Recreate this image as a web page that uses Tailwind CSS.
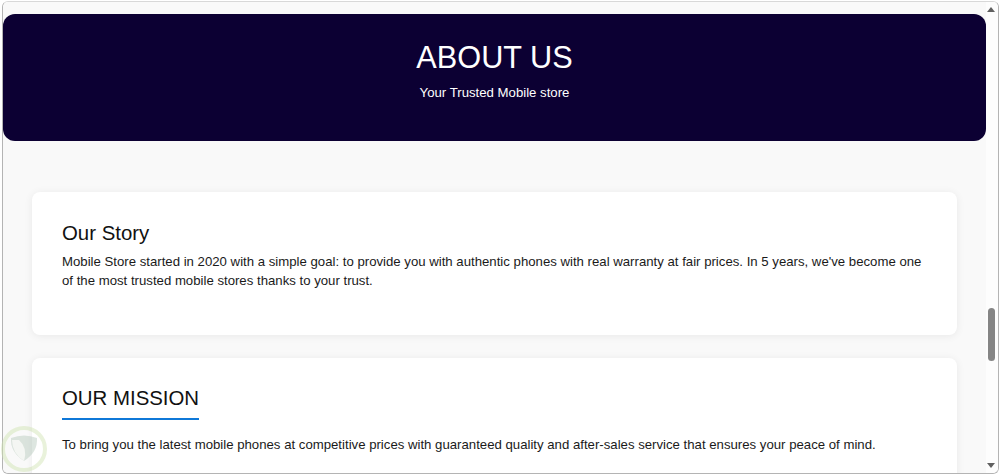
<!DOCTYPE html>
<html lang="en">
<head>
  <meta charset="UTF-8" />
  <title>About Us</title>
  <script src="https://cdn.jsdelivr.net/npm/@tailwindcss/browser@4"></script>
</head>
<body class="bg-white font-['Liberation_Sans',Arial,sans-serif]">
  <div class="relative h-[476px] w-[1000px] overflow-hidden pt-px pr-px pb-[2px] pl-[2px]">
    <!-- window frame -->
    <div class="flex h-[473px] w-[997px] overflow-hidden rounded-[6px] border border-[#b4b4b4] border-t-[#d8d8d8]">
      <!-- page -->
      <main class="h-full w-[983px] overflow-hidden bg-[#f9f9f9] pt-[12px]">
        <header class="flex h-[127px] flex-col items-center rounded-[12px] bg-[#0c0033] pt-[26px] text-white">
          <h1 class="text-[30.7px] leading-[36px]">ABOUT US</h1>
          <p class="mt-[8px] text-[13.2px] leading-[18px]">Your Trusted Mobile store</p>
        </header>

        <section class="mx-[29px] mt-[51px] h-[143px] rounded-[8px] bg-white px-[30px] pt-[29px] shadow-[0_1px_8px_rgba(0,0,0,0.07)]">
          <h2 class="text-[20.4px] leading-[25px] text-[#111]">Our Story</h2>
          <p class="mt-[6px] text-[13.2px] leading-[19px] text-[#1a1a1a]">Mobile Store started in 2020 with a simple goal: to provide you with authentic phones with real warranty at fair prices. In 5 years, we've become one of the most trusted mobile stores thanks to your trust.</p>
        </section>

        <section class="mx-[29px] mt-[23px] h-[140px] rounded-[8px] bg-white px-[30px] pt-[28px] shadow-[0_1px_8px_rgba(0,0,0,0.07)]">
          <h2 class="inline-block border-b-[2px] border-[#0f78d8] pb-[8px] text-[20.4px] leading-[24px] text-[#111]">OUR MISSION</h2>
          <p class="mt-[15px] text-[13.2px] leading-[20px] text-[#1a1a1a]">To bring you the latest mobile phones at competitive prices with guaranteed quality and after-sales service that ensures your peace of mind.</p>
        </section>
      </main>

      <!-- scrollbar -->
      <div class="relative h-full w-[12px] bg-[#fdfdfd]">
        <div class="absolute top-[5px] left-[1px] h-0 w-0 border-x-[4px] border-b-[5px] border-x-transparent border-b-[#606060]"></div>
        <div class="absolute top-[306px] left-[2px] h-[53px] w-[7px] rounded-[4px] bg-[#858585]"></div>
        <div class="absolute bottom-[5px] left-[1px] h-0 w-0 border-x-[4px] border-t-[5px] border-x-transparent border-t-[#606060]"></div>
      </div>
    </div>

    <!-- watermark -->
    <svg class="absolute top-[425px] left-0 opacity-45" width="48" height="48" viewBox="0 0 48 48" fill="none">
      <circle cx="24" cy="24" r="21" stroke="#cfe3b0" stroke-width="4" fill="#ffffff" fill-opacity="0.4" />
      <path d="M11 13 Q24 8 37 13 Q38 27 24 36 Q10 27 11 13Z" fill="#b5c9bb" />
      <path d="M19 15 Q28 23 24 36 Q12 28 12 15Z" fill="#f0f4ec" />
    </svg>
  </div>
</body>
</html>
